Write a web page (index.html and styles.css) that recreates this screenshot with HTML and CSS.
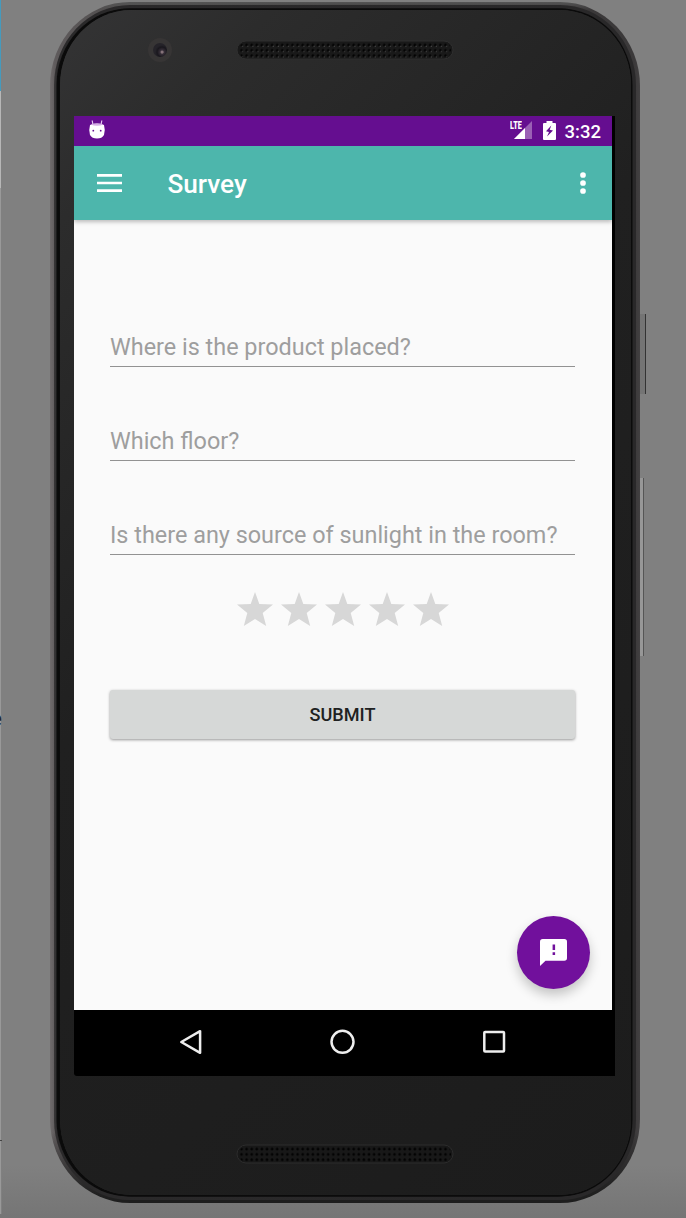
FILE: index.html
```html
<!DOCTYPE html>
<html lang="en">
<head>
<meta charset="utf-8">
<title>Survey</title>
<link rel="stylesheet" href="styles.css">
</head>
<body>
<div class="desktop">
  <div class="window-edge"><span class="edge-letter">e</span><i class="edge-tick"></i></div>
  <div class="key power"></div>
  <div class="key volume"></div>
  <div class="phone">
    <div class="rim">
      <div class="face">
        <div class="top-bezel">
          <div class="camera"><div class="lens"></div></div>
          <svg class="speaker" width="218" height="20" viewBox="0 0 218 20">
            <defs>
              <pattern id="holes" x="3" y="2.5" width="5.1" height="5.3" patternUnits="userSpaceOnUse">
                <circle cx="2.5" cy="2.6" r="1.4" fill="#030303"/>
                <circle cx="3.6" cy="3.700" r=".65" fill="#4a4a4a"/>
              </pattern>
              <pattern id="holes-dark" x="3" y="2.5" width="5.1" height="5.3" patternUnits="userSpaceOnUse">
                <circle cx="2.5" cy="2.6" r="1.4" fill="#030303"/>
              </pattern>
            </defs>
            <rect x="1" y="1" width="216" height="18" rx="9" fill="#191919" stroke="#2f2f2f" stroke-width="1"/>
            <rect x="3" y="2.5" width="212" height="15.5" rx="7" fill="url(#holes)"/>
          </svg>
        </div>
        <div class="display">
          <div class="app">
            <header class="status-bar">
              <svg class="droid" width="18" height="20" viewBox="0 0 18 20">
                <path d="M4.2 .5l.8 5M13.8 .5l-.8 5" stroke="#e3c9ee" stroke-width="1.2"/>
                <path d="M2 5Q9 2.500 16 5Q17.600 10.500 16 15Q14 18.500 9 18.500T2 15Q.4 10.500 2 5Z" fill="#fff"/>
                <path d="M2.500 4.500Q9 2 15.500 4.500Q9 7 2.500 4.500Z" fill="#d5afe5"/>
                <circle cx="5.300" cy="10.700" r=".9" fill="#650e90"/><circle cx="12.700" cy="10.700" r=".9" fill="#650e90"/>
              </svg>
              <div class="status-right">
                <div class="signal">
                  <svg width="24" height="19" viewBox="0 0 24 19"><path d="M23 0v18H5Z" fill="#9a60b5"/><path d="M5 18L16 7v11Z" fill="#fff"/><path d="M3 0h10v9H3z" fill="#650e90"/></svg>
                  <span class="lte">LTE</span>
                </div>
                <svg class="battery" width="13" height="19" viewBox="0 0 13 19"><path d="M3.500 2V0h6v2H12q1 0 1 1v15q0 1-1 1H1q-1 0-1-1V3q0-1 1-1Z" fill="#fff"/><path d="M8.300 4.500L3 10.300l3 .8-2 4.500 6-6-3.300-.8Z" fill="#650e90"/></svg>
                <span class="clock">3:32</span>
              </div>
            </header>
            <nav class="toolbar">
              <svg class="menu" width="25" height="18" viewBox="0 0 25 18"><path d="M0 1.400h25M0 9h25M0 16.600h25" stroke="#fff" stroke-width="2.700"/></svg>
              <h1 class="title">Survey</h1>
              <svg class="more" width="6" height="22" viewBox="0 0 6 22"><g fill="#fff"><circle cx="3" cy="3" r="2.850"/><circle cx="3" cy="11" r="2.850"/><circle cx="3" cy="19" r="2.850"/></g></svg>
            </nav>
            <main class="content">
              <div class="field">Where is the product placed?</div>
              <div class="field">Which floor?</div>
              <div class="field">Is there any source of sunlight in the room?</div>
              <div class="stars">
                <svg class="star" viewBox="0 0 36 34"><path d="M18 0l4.300 12L36 12.500 25.700 21l3.500 13L18 27.100 6.800 34l3.500-13L0 12.500l13.700-.5Z"/></svg>
                <svg class="star" viewBox="0 0 36 34"><path d="M18 0l4.300 12L36 12.500 25.700 21l3.500 13L18 27.100 6.800 34l3.500-13L0 12.500l13.700-.5Z"/></svg>
                <svg class="star" viewBox="0 0 36 34"><path d="M18 0l4.300 12L36 12.500 25.700 21l3.500 13L18 27.100 6.800 34l3.500-13L0 12.500l13.700-.5Z"/></svg>
                <svg class="star" viewBox="0 0 36 34"><path d="M18 0l4.300 12L36 12.500 25.700 21l3.500 13L18 27.100 6.800 34l3.500-13L0 12.500l13.700-.5Z"/></svg>
                <svg class="star" viewBox="0 0 36 34"><path d="M18 0l4.300 12L36 12.500 25.700 21l3.500 13L18 27.100 6.800 34l3.500-13L0 12.500l13.700-.5Z"/></svg>
              </div>
              <button class="submit">SUBMIT</button>
              <button class="fab" aria-label="Feedback">
                <svg width="27" height="27" viewBox="0 0 27 27"><path d="M2.700 0h21.600Q27 0 27 2.700V19q0 2.700-2.700 2.700H5.500L0 27V2.700Q0 0 2.700 0Z" fill="#fff"/><path d="M12.600 5.500h2.500V11h-2.500zM12.600 13.200h2.500v2.900h-2.500z" fill="#71109c"/></svg>
              </button>
            </main>
          </div>
          <footer class="nav-bar">
            <svg class="nav-icon" viewBox="0 0 28 28"><path d="M23.100 3.200v21.600L4.300 14Z"/></svg>
            <svg class="nav-icon" viewBox="0 0 28 28"><circle cx="13.500" cy="13.800" r="11"/></svg>
            <svg class="nav-icon" viewBox="0 0 28 28"><rect x="4.300" y="3.900" width="19.700" height="19.700" rx=".8"/></svg>
          </footer>
        </div>
        <div class="bottom-bezel">
          <svg class="speaker" width="218" height="20" viewBox="0 0 218 20">
            <rect x="1" y="1" width="216" height="18" rx="9" fill="#181818" stroke="#2c2c2c" stroke-width="1"/>
            <rect x="3" y="2.500" width="212" height="15.500" rx="7" fill="url(#holes-dark)"/>
          </svg>
        </div>
      </div>
    </div>
  </div>
</div>
</body>
</html>
```
FILE: styles.css
```css
* { box-sizing: border-box; }
body { margin: 0; font-family: Roboto, "Liberation Sans", sans-serif; }
.desktop {
  position: relative;
  width: 686px;
  height: 1218px;
  padding: 2px 0 0 50px;
  overflow: hidden;
  background: linear-gradient(#808080 0, #808080 1165px, #757575 1218px);
}
.window-edge {
  position: absolute;
  left: 0;
  top: 0;
  width: 2px;
  height: 1214px;
  overflow: hidden;
  background: linear-gradient(90deg, transparent 1px, #808080 1px), linear-gradient(#459abd 0 91px, #b7b7b7 91px 188px, #999 188px);
}
.edge-letter { position: absolute; right: 0; top: 706px; font-size: 22px; line-height: 26px; color: #222; }
.edge-tick { position: absolute; left: 0; top: 1140px; width: 2px; height: 1px; background: #444; }
.key { position: absolute; background: #747474; border-right: 1px solid #333; }
.power { left: 639px; top: 314px; width: 7px; height: 80px; }
.volume { left: 639px; top: 478px; width: 5px; height: 178px; background: #979797; border-right-color: #555; }
.phone {
  position: relative;
  width: 590px;
  height: 1201px;
  padding: 3px 4px 3px 4px;
  border-radius: 80px / 84px;
  background: linear-gradient(#555 0, transparent 8px, transparent 1130px, #1e1e1e 1196px), linear-gradient(90deg, #706c6d 0, #5f5b5c 5px, #4b4949 80px, #353333 300px, #3b393a 584px, #424041 100%);
}
.rim {
  height: 100%;
  padding: 5px 5px 5px 6px;
  border-radius: 76px / 80px;
  background: linear-gradient(90deg, #383637, #2a292a 4px, #292829);
}
.face {
  display: flex;
  flex-direction: column;
  height: 100%;
  padding-left: 14px;
  border-radius: 71px / 75px;
  background: linear-gradient(135deg, #343435 0, #2c2c2c 150px, #202020 520px, #1c1c1c 100%);
  box-shadow: 0 0 0 1.5px #0b0b0b, -2px 0 0 1.5px #0b0b0b;
}
.top-bezel { display: flex; height: 106px; padding: 28px 0 0 74px; gap: 64px; }
.camera { display: flex; align-items: center; justify-content: center; width: 24px; height: 24px; border-radius: 50%; background: #373535; }
.lens { width: 14px; height: 14px; border-radius: 50%; background: radial-gradient(circle at 65% 65%, #86737a 0 1px, #38303a 2px, #19171d 5px, #252329 7px); }
.speaker { display: block; margin-top: 2px; }
.display { width: 541px; height: 960px; background: #000; border-radius: 0 0 0 3px; }
.app { width: 538px; height: 894px; background: #fafafa; }
.status-bar { display: flex; justify-content: space-between; height: 30px; padding: 4px 11px 0 14px; background: #650e90; }
.status-right { display: flex; align-items: flex-start; color: #fff; }
.signal { position: relative; width: 24px; height: 20px; padding-top: 1px; }
.lte { position: absolute; left: 1px; top: 1px; font: 900 11px/10px Roboto, sans-serif; transform: scaleX(.66); transform-origin: left; }
.battery { margin: 1px 9px 0 10px; }
.clock { font-size: 18.500px; line-height: 24px; font-weight: 500; }
.toolbar { position: relative; display: flex; align-items: center; height: 74px; padding: 0 26px 0 23.400px; background: #4db6ac; box-shadow: 0 2px 4px rgba(0,0,0,.25); clip-path: inset(0 0 -8px 0); }
.title { margin: 2px 0 0 45px; color: #fff; font-size: 26.200px; line-height: 32px; font-weight: 500; }
.more { margin-left: auto; }
.content { position: relative; height: 790px; padding: 106.500px 37px 0 36px; }
.field { height: 40px; margin-bottom: 54.200px; border-bottom: 1.500px solid #929292; color: #9e9e9e; font-size: 23.420px; line-height: 41px; white-space: nowrap; }
.stars { display: flex; justify-content: center; gap: 8px; margin: -17.300px 0 0 0; }
.star { width: 36px; height: 34px; fill: #d7d7d7; }
.submit { display: block; width: 465px; height: 49px; margin-top: 64px; padding: 0; border: 0; border-radius: 3px; background: #d6d8d7; box-shadow: 0 1px 3px rgba(0,0,0,.4); color: #202121; font: 500 18.100px/49px Roboto, sans-serif; }
.fab { position: absolute; right: 22px; bottom: 21px; display: flex; align-items: center; justify-content: center; width: 73px; height: 73px; padding: 0; border: 0; border-radius: 50%; background: #71109c; box-shadow: 0 6px 12px rgba(0,0,0,.22); }
.nav-bar { display: flex; align-items: center; justify-content: space-between; height: 66px; padding: 0 107px 3px 103px; }
.nav-icon { width: 28px; height: 28px; fill: none; stroke: #eee; stroke-width: 2.500; stroke-linejoin: round; }
.bottom-bezel { padding: 66px 0 0 162px; }
```
